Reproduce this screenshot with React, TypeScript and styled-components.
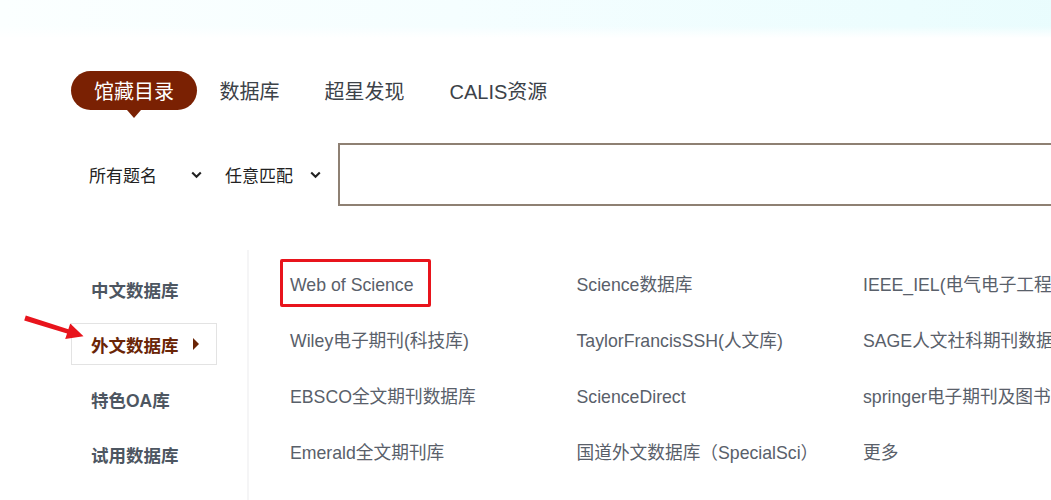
import React from "react";
import styled, { createGlobalStyle, css } from "styled-components";

const GlobalStyle = createGlobalStyle`
  html, body {
    margin: 0;
    padding: 0;
    background: #ffffff;
    overflow: hidden;
  }
  body {
    font-family: "Liberation Sans", "Noto Sans CJK SC", Arial, sans-serif;
  }
  * { box-sizing: border-box; }
`;

const Page = styled.div`
  width: 1300px;
  min-height: 500px;
`;

const TopBand = styled.div`
  height: 38px;
  background:
    linear-gradient(to bottom, rgba(255, 255, 255, 0) 0, rgba(255, 255, 255, 0) 26px, #ffffff 38px),
    linear-gradient(to right, #fbffff 0%, #f5feff 35%, #ecfdfe 70%, #e4fbfc 100%);
`;

const TabRow = styled.nav`
  display: flex;
  align-items: center;
  margin: 33px 0 0 71px;
  height: 39px;
`;

const Tab = styled.div<{ $active?: boolean }>`
  position: relative;
  height: 39px;
  display: flex;
  align-items: center;
  padding: 0 22.5px;
  font-size: 20px;
  color: #3c4248;
  white-space: nowrap;
  ${(p) =>
    p.$active &&
    css`
      background: #7a2103;
      color: #ffffff;
      border-radius: 20px;
      padding: 0 23px;
      &::after {
        content: "";
        position: absolute;
        left: 50%;
        bottom: -8px;
        transform: translateX(-50%);
        border-left: 7px solid transparent;
        border-right: 7px solid transparent;
        border-top: 8px solid #7a2103;
      }
    `}
`;

const SearchRow = styled.div`
  display: flex;
  align-items: center;
  margin: 33px 0 0 71px;
  height: 63px;
`;

const Select = styled.div<{ $w: number }>`
  width: ${(p) => p.$w}px;
  height: 100%;
  display: flex;
  align-items: center;
  justify-content: space-between;
  padding: 0 5px 0 18px;
  font-size: 17px;
  color: #222222;
  font-family: "Noto Sans CJK SC", sans-serif;
`;

const SearchBox = styled.div`
  margin-left: 12px;
  width: 900px;
  height: 63px;
  border: 2px solid #8e8073;
  background: #ffffff;
`;

const Chevron = () => (
  <svg width="11" height="8" viewBox="0 0 11 8">
    <polyline points="1.2,1.5 5.5,5.8 9.8,1.5" fill="none" stroke="#222" strokeWidth="2.1" />
  </svg>
);

const Body = styled.section`
  display: flex;
  margin: 44px 0 0 71px;
  position: relative;
`;

const Sidebar = styled.ul`
  list-style: none;
  margin: 0;
  padding: 18px 0 20px 0;
  width: 178px;
  border-right: 2px solid #f5f5f6;
  display: flex;
  flex-direction: column;
  gap: 13px;
  min-height: 250px;
`;

const SideItem = styled.li<{ $active?: boolean }>`
  width: 146px;
  height: 42px;
  display: flex;
  align-items: center;
  gap: 14px;
  padding-left: 19px;
  font-size: 17.5px;
  font-weight: 700;
  color: #4d5661;
  border: 1px solid transparent;
  ${(p) =>
    p.$active &&
    css`
      color: #6a2506;
      border-color: #e3e3e3;
    `}
`;

const Caret = styled.span`
  width: 0;
  height: 0;
  border-top: 6px solid transparent;
  border-bottom: 6px solid transparent;
  border-left: 6px solid #6a2506;
`;

const Grid = styled.div`
  display: grid;
  grid-template-columns: repeat(3, 286.5px);
  grid-auto-rows: 56px;
  padding: 7px 0 0 41px;
  align-content: start;
`;

const Cell = styled.div`
  display: flex;
  align-items: center;
  font-size: 17.7px;
  color: #59606a;
  white-space: nowrap;
`;

const Label = styled.span<{ $marked?: boolean }>`
  position: relative;
  line-height: 22px;
  ${(p) =>
    p.$marked &&
    css`
      &::after {
        content: "";
        position: absolute;
        top: -15px;
        bottom: -11px;
        left: -10px;
        right: -17px;
        border: 3px solid #e8141c;
        border-radius: 2px;
      }
    `}
`;

const Pointer = styled.svg`
  position: absolute;
  left: -51px;
  top: 60px;
`;

const sideItems = ["中文数据库", "外文数据库", "特色OA库", "试用数据库"];

const databases = [
  "Web of Science",
  "Science数据库",
  "IEEE_IEL(电气电子工程师学会)",
  "Wiley电子期刊(科技库)",
  "TaylorFrancisSSH(人文库)",
  "SAGE人文社科期刊数据库",
  "EBSCO全文期刊数据库",
  "ScienceDirect",
  "springer电子期刊及图书",
  "Emerald全文期刊库",
  "国道外文数据库（SpecialSci）",
  "更多",
];

export default function App() {
  return (
    <Page>
      <GlobalStyle />
      <TopBand />
      <TabRow>
        <Tab $active>馆藏目录</Tab>
        <Tab>数据库</Tab>
        <Tab>超星发现</Tab>
        <Tab>CALIS资源</Tab>
      </TabRow>
      <SearchRow>
        <Select $w={136}>
          <span>所有题名</span>
          <Chevron />
        </Select>
        <Select $w={119}>
          <span>任意匹配</span>
          <Chevron />
        </Select>
        <SearchBox />
      </SearchRow>
      <Body>
        <Pointer width="70" height="34" viewBox="0 0 70 34">
          <polygon
            points="5.8,5.5 48.35,19.2 50.2,13.6 63.5,26.2 45.2,29 47.05,23.6 4.2,10.5"
            fill="#e8141c"
          />
        </Pointer>
        <Sidebar>
          {sideItems.map((s, i) => (
            <SideItem key={s} $active={i === 1}>
              {s}
              {i === 1 && <Caret />}
            </SideItem>
          ))}
        </Sidebar>
        <Grid>
          {databases.map((d, i) => (
            <Cell key={d}>
              <Label $marked={i === 0}>{d}</Label>
            </Cell>
          ))}
        </Grid>
      </Body>
    </Page>
  );
}
